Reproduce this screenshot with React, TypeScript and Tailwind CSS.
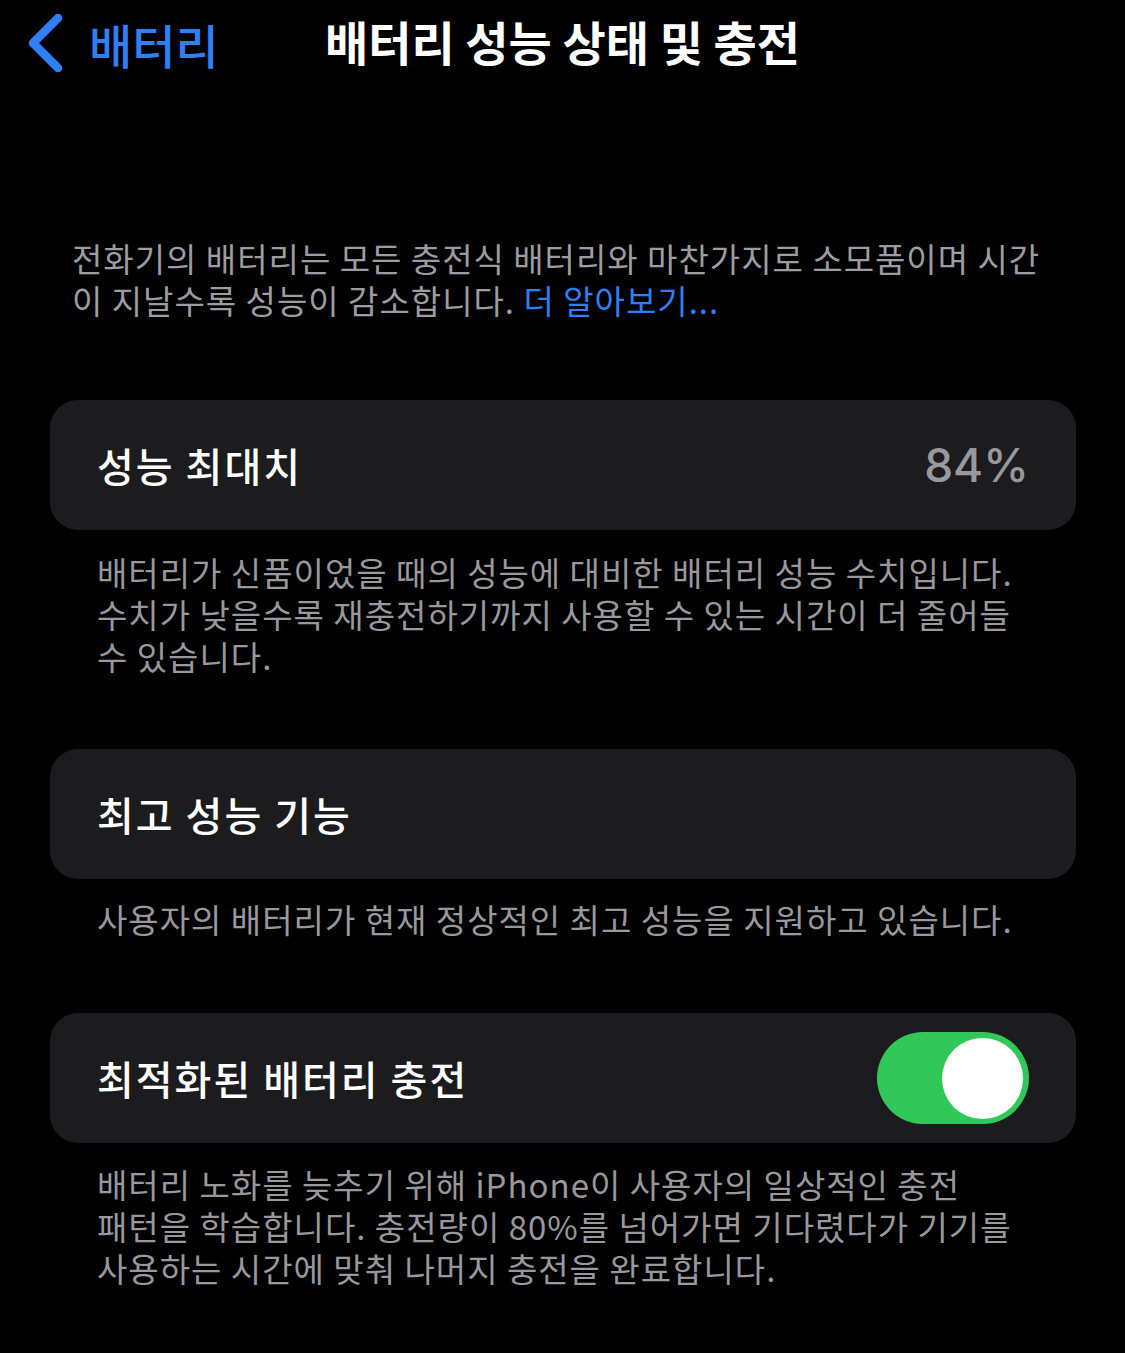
import React from "react";

const KR = { fontFamily: '"Noto Sans CJK KR", "Noto Sans", sans-serif' };

function Card({ children }: { children: React.ReactNode }) {
  return (
    <div className="ml-[50px] mr-[49px] h-[130px] rounded-[28px] bg-[#1c1c1e] flex items-center justify-between pl-[47px] pr-[47px]">
      {children}
    </div>
  );
}

function Desc({ children, className = "" }: { children: React.ReactNode; className?: string }) {
  return (
    <p className={`ml-[97px] text-[33px] leading-[42px] tracking-[1px] text-[#98989d] whitespace-nowrap ${className}`}>
      {children}
    </p>
  );
}

export default function App() {
  return (
    <div className="w-[1125px] h-[1353px] bg-black text-white overflow-hidden" style={KR}>
      {/* Header */}
      <div className="relative h-[86px] flex items-center justify-center">
        <div className="absolute left-[26px] top-[13px] flex items-center">
          <svg width="42" height="62" viewBox="0 0 42 62" className="block">
            <polyline
              points="32,5 7,30 32,55"
              fill="none"
              stroke="#2f80f7"
              strokeWidth="8.5"
              strokeLinecap="round"
              strokeLinejoin="round"
            />
          </svg>
          <span className="ml-[21px] text-[47px] leading-[62px] font-medium tracking-[0px] text-[#2f80f7]">
            배터리
          </span>
        </div>
        <h1 className="text-[47px] leading-[62px] font-bold tracking-[0px] mt-[-4px]">
          배터리 성능 상태 및 충전
        </h1>
      </div>

      {/* Intro */}
      <p className="mt-[151px] ml-[72px] text-[33px] leading-[42px] tracking-[1px] text-[#9c9ca1] whitespace-nowrap">
        전화기의 배터리는 모든 충전식 배터리와 마찬가지로 소모품이며 시간
        <br />
        이 지날수록 성능이 감소합니다. <span className="text-[#2f80f7]">더 알아보기...</span>
      </p>

      <div className="mt-[79px]">
        <Card>
          <span className="text-[40px] font-medium tracking-[2px]">성능 최대치</span>
          <span
            className="text-[46px] font-medium text-[#98989d]"
            style={{ fontFamily: 'Inter, "Noto Sans", sans-serif' }}
          >
            84%
          </span>
        </Card>
      </div>

      <Desc className="mt-[21px]">
        배터리가 신품이었을 때의 성능에 대비한 배터리 성능 수치입니다.
        <br />
        수치가 낮을수록 재충전하기까지 사용할 수 있는 시간이 더 줄어들
        <br />수 있습니다.
      </Desc>

      <div className="mt-[72px]">
        <Card>
          <span className="text-[40px] font-medium tracking-[2px]">최고 성능 기능</span>
        </Card>
      </div>

      <Desc className="mt-[19px]">사용자의 배터리가 현재 정상적인 최고 성능을 지원하고 있습니다.</Desc>

      <div className="mt-[73px]">
        <Card>
          <span className="text-[40px] font-medium tracking-[2px]">최적화된 배터리 충전</span>
          <div className="w-[152px] h-[92px] rounded-full bg-[#32c759] flex items-center justify-end pr-[6px]">
            <div className="w-[81px] h-[81px] rounded-full bg-white" />
          </div>
        </Card>
      </div>

      <Desc className="mt-[20px]">
        배터리 노화를 늦추기 위해 iPhone이 사용자의 일상적인 충전
        <br />
        패턴을 학습합니다. 충전량이 80%를 넘어가면 기다렸다가 기기를
        <br />
        사용하는 시간에 맞춰 나머지 충전을 완료합니다.
      </Desc>
    </div>
  );
}
